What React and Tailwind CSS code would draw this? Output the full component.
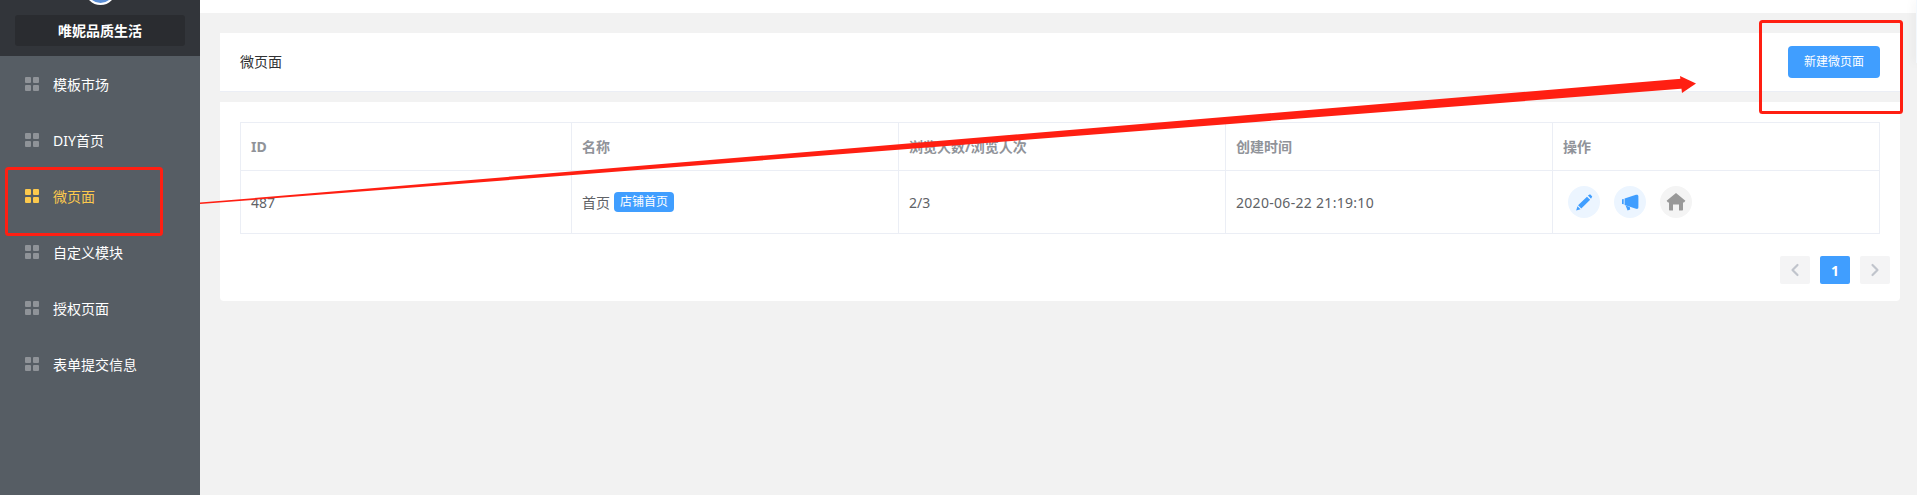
import { ChevronLeft, ChevronRight } from 'lucide-react';

const menu = [
  { label: '模板市场' },
  { label: 'DIY首页' },
  { label: '微页面', active: true },
  { label: '自定义模块' },
  { label: '授权页面' },
  { label: '表单提交信息' },
];

const cjk = "font-['Noto_Sans','Noto_Sans_CJK_SC',sans-serif]";

function GridIcon({ active }) {
  const cell = `rounded-[1px] ${active ? 'bg-[#fcc94d]' : 'bg-[#8f9398]'}`;
  return (
    <div className="grid h-[14px] w-[14px] grid-cols-2 gap-[1.5px]">
      <span className={cell} />
      <span className={cell} />
      <span className={cell} />
      <span className={cell} />
    </div>
  );
}

function Sidebar() {
  return (
    <aside className="flex w-[200px] shrink-0 flex-col bg-[#565d64]">
      <div className="relative flex h-[56px] items-end bg-[#32353a] px-[15px] pb-[10px]">
        {/* logo, mostly scrolled out of view */}
        <div className="absolute left-[85px] top-[-26px] h-[31px] w-[31px] rounded-full border-[2px] border-white bg-[#5b8fd6]" />
        <div className="flex h-[31px] w-full items-center justify-center rounded-[3px] bg-[#2a2c30] text-[14px] font-bold text-white">
          唯妮品质生活
        </div>
      </div>
      <nav className="flex flex-col">
        {menu.map((item) => (
          <a
            key={item.label}
            className={`flex h-[56px] items-center gap-[14px] pl-[25px] text-[14px] ${item.active ? 'text-[#fcc94d]' : 'text-white'}`}
          >
            <GridIcon active={item.active} />
            {item.label}
          </a>
        ))}
      </nav>
    </aside>
  );
}

function ActionIcon({ gray, children }) {
  return (
    <span className={`flex h-[32px] w-[32px] items-center justify-center rounded-full ${gray ? 'bg-[#f4f4f4]' : 'bg-[#ecf5ff]'}`}>
      {children}
    </span>
  );
}

function PageBtn({ children, active }) {
  return (
    <button className={`flex h-[28px] w-[30px] items-center justify-center rounded-[2px] text-[14px] font-bold ${active ? 'bg-[#409eff] text-white' : 'bg-[#f4f4f5] text-[#c0c4cc]'}`}>
      {children}
    </button>
  );
}

function Table() {
  const th = 'border border-[#ebeef5] px-[10px] text-left text-[14px] font-bold text-[#909399]';
  const td = 'border border-[#ebeef5] px-[10px] text-left text-[14px] font-normal text-[#606266]';
  return (
    <table className="w-full table-fixed border-collapse">
      <colgroup>
        <col className="w-[331px]" />
        <col className="w-[327px]" />
        <col className="w-[327px]" />
        <col className="w-[327px]" />
        <col />
      </colgroup>
      <thead>
        <tr className="h-[48px]">
          <th className={th}>ID</th>
          <th className={th}>名称</th>
          <th className={th}>浏览人数/浏览人次</th>
          <th className={th}>创建时间</th>
          <th className={th}>操作</th>
        </tr>
      </thead>
      <tbody>
        <tr className="h-[63px]">
          <td className={td}>487</td>
          <td className={td}>
            <div className="flex items-center gap-[4px]">
              首页
              <span className="flex h-[20px] w-[60px] items-center justify-center rounded-[4px] bg-[#409eff] text-[12px] text-white">店铺首页</span>
            </div>
          </td>
          <td className={td}>2/3</td>
          <td className={`${td} tracking-[0.3px]`}>2020-06-22 21:19:10</td>
          <td className={td}>
            <div className="flex gap-[14px] pl-[5px]">
              <ActionIcon>
                <svg width="17" height="17" viewBox="0 0 18 18" fill="#409eff">
                  <path d="M12.6 1.6 14.9 0.2 17.2 2.6 15.9 5zM11.6 2.8 15 6.2 5.6 15.4 2.2 12z" />
                  <path d="M1.6 13 4.8 16.2 0.2 17.6z" />
                </svg>
              </ActionIcon>
              <ActionIcon>
                <svg width="17" height="17" viewBox="0 0 17 17" fill="#409eff">
                  <path d="M0 5.2 1.7 4.9V10.2L0 9.9z" />
                  <path d="M2.6 4.6 14 0.8C15.4 0.4 16.4 1 16.4 2.4V13.2C16.4 14.6 15.4 15.2 14 14.8L2.6 11z" />
                  <path d="M3.6 11.6 7.8 13 8.2 15.6 5.6 16.6z" />
                </svg>
              </ActionIcon>
              <ActionIcon gray>
                <svg width="20" height="20" viewBox="0 0 20 20" fill="#999999">
                  <path d="M10 1 19.4 8.8 18 10.4H17V17.4C17 18 16.6 18.4 16 18.4H13V12.4H7V18.4H4C3.4 18.4 3 18 3 17.4V10.4H2L0.6 8.8z" />
                </svg>
              </ActionIcon>
            </div>
          </td>
        </tr>
      </tbody>
    </table>
  );
}

function Annotations() {
  return (
    <svg className="pointer-events-none absolute left-0 top-0" width="1917" height="495" fill="none">
      <rect x="6.5" y="168.5" width="155" height="66" rx="2" stroke="#ff1f12" strokeWidth="3" />
      <rect x="1760.5" y="21.5" width="141" height="91" rx="2" stroke="#ff1f12" strokeWidth="3" />
      <path d="M200 202.6 1684 78.6 1684 88.6 200 204z" fill="#ff1f12" />
      <path d="M1680 76 1696 83.5 1682 93z" fill="#ff1f12" />
    </svg>
  );
}

export default function App() {
  return (
    <div className={`relative flex h-[495px] w-[1917px] overflow-hidden bg-[#f2f2f2] ${cjk}`}>
      <Sidebar />
      <main className="flex min-w-0 flex-1 flex-col">
        <div className="h-[13px] bg-white" />
        <div className="flex flex-col gap-[10px] pl-[20px] pr-[17px] pt-[20px]">
          <div className="flex h-[59px] items-center justify-between border-b border-[#ebeef5] bg-white px-[20px]">
            <span className="mb-[2px] text-[14px] text-[#303133]">微页面</span>
            <button className="h-[32px] w-[92px] rounded-[4px] bg-[#409eff] text-[12px] text-white">新建微页面</button>
          </div>
          <div className="flex flex-col rounded-b-[4px] bg-white px-[20px] pb-[17px] pt-[20px]">
            <Table />
            <div className="mr-[-10px] mt-[22px] flex justify-end gap-[10px]">
              <PageBtn><ChevronLeft size={20} strokeWidth={2.6} /></PageBtn>
              <PageBtn active>1</PageBtn>
              <PageBtn><ChevronRight size={20} strokeWidth={2.6} /></PageBtn>
            </div>
          </div>
        </div>
      </main>
      {/* edge of a side panel sticking in from the right */}
      <div className="absolute right-0 top-0 h-[63px] w-[1px] bg-[#f3f8fd] shadow-[0_0_10px_rgba(0,0,0,0.25)]" />
      <Annotations />
    </div>
  );
}
